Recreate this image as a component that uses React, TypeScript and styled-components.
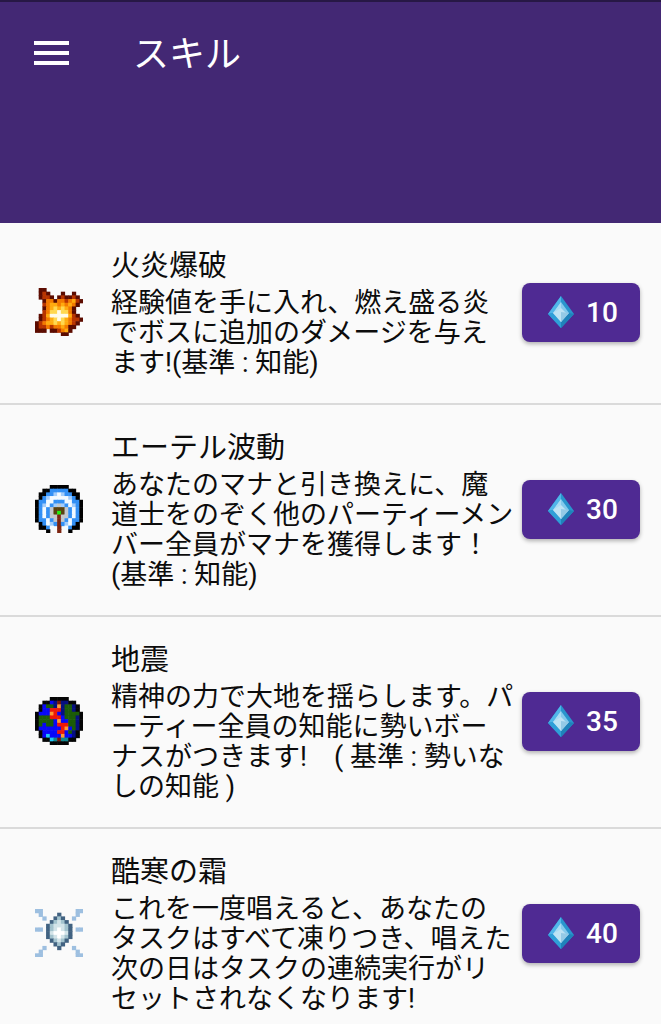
import React from 'react';
import styled, { createGlobalStyle } from 'styled-components';

const GlobalStyle = createGlobalStyle`
  * { box-sizing: border-box; }
  body {
    margin: 0;
    background: #fafafa;
    color: #0c0c0c;
    font-family: Roboto, 'Noto Sans CJK JP', sans-serif;
  }
`;

const Page = styled.div`
  height: 100vh;
  overflow: hidden;
`;

const Header = styled.header`
  height: 223px;
  padding: 25px 34px 0;
  border-top: 2px solid #271845;
  background: #432874;
`;

const Toolbar = styled.div`
  display: flex;
  align-items: center;
  gap: 64px;
  height: 52px;
`;

const MenuButton = styled.button`
  display: flex;
  padding: 0;
  border: 0;
  background: none;
  cursor: pointer;
`;

const Title = styled.h1`
  margin: 0;
  padding-top: 4px;
  color: #fff;
  font-size: 36px;
  font-weight: 400;
  line-height: 52px;
`;

const SkillList = styled.ul`
  margin: 0;
  padding: 0;
  list-style: none;
`;

const SkillRow = styled.li`
  display: flex;
  align-items: center;
  padding: 23px 21px 25px 35px;
  border-bottom: 2px solid #dadada;
`;

const PixelSvg = styled.svg`
  flex: none;
  width: 48px;
  height: 48px;
  margin-right: 28px;
`;

const SkillText = styled.div`
  flex: 1;
  min-width: 0;
`;

const SkillName = styled.h2`
  margin: 0;
  font-size: 29px;
  font-weight: 400;
  line-height: 41px;
`;

const SkillNotes = styled.p`
  margin: 0;
  padding-top: 1px;
  font-size: 27px;
  line-height: 30px;
  white-space: pre;
`;

const CastButton = styled.button`
  display: flex;
  flex: none;
  align-items: center;
  gap: 12px;
  width: 118px;
  height: 59px;
  padding: 0 0 0 26px;
  border: 0;
  border-radius: 8px;
  background: #4f2a93;
  box-shadow: 0 2px 4px rgba(0, 0, 0, 0.3);
  color: #fff;
  font: 500 28px/32px Roboto, sans-serif;
  cursor: pointer;
`;

const Cost = styled.span`
  padding-top: 2px;
`;

const palettes = {
  flame: { D: '#5c0c00', r: '#b83400', o: '#f37a00', y: '#ffab10', Y: '#ffd850', w: '#fffbe8' },
  wave: { K: '#000', b: '#3390f5', l: '#a4cdfb', w: '#f4faff', g: '#c4c8cc', n: '#5a4110', G: '#20f010', r: '#7c2410' },
  globe: { K: '#050505', b: '#0808f8', n: '#061080', g: '#1c5c08', r: '#ee1808', o: '#ff9a30', c: '#20c8f8', t: '#108890', d: '#781808' },
  frost: { L: '#9dbfe0', S: '#416281', m: '#a3c3ce', p: '#d3e4e9', w: '#ffffff' },
};

const sprites = {
  flame: [
    '.DD..........',
    '.DrD...D..D..',
    '.DrrD.DrDDrD.',
    '..DooDooroyrD',
    '..royyoyoyoD.',
    '..DoyYyYyoD..',
    '..roYYwYYoD..',
    '.DrywwwwwyrD.',
    '.DroyYwYyorrD',
    'DroyyYyYyorD.',
    'DrrorooyoDD..',
    'DDD.DDroyD...',
    '.......DD....',
  ],
  wave: [
    '....KKKKK....',
    '..KKbbbbbKK..',
    '.KKbblwlbbKK.',
    '.KblwwwwwlbK.',
    'KbbwwbbbwwbbK',
    'KblwblglbwlbK',
    'KbwbgnnngbwbK',
    'KbwbgnGngbwbK',
    'KbwbggrggbwbK',
    'KbbwbgrgbwbbK',
    '.KbwlbrblwbK.',
    '.KKbw.r.wbKK.',
    '...K..r..K...',
  ],
  globe: [
    '....KKKKK....',
    '..KKbndnnKK..',
    '.KbggnonggnK.',
    '.KbbrrrnggnK.',
    'KbbborbnggggK',
    'KgggrrrbgggnK',
    'KggggbobbggnK',
    'KgbggbrrrggnK',
    'KbbbbbbrobgnK',
    '.KbbbbrrbgnK.',
    '.KbcbbbobbnK.',
    '..KKctdttKK..',
    '....KKKKK....',
  ],
  frost: [
    'LL.........LL',
    '.L....S....L.',
    '..L..SmS..L..',
    '....SmpmS....',
    '...SmpppmS...',
    'LL.SmpwpmS.LL',
    '...SpwwwpS...',
    '...SmpwpmS...',
    '....SmpmS....',
    '.....SmS.....',
    '..L...S...L..',
    '.L.........L.',
    'LL.........LL',
  ],
};

type SpriteName = keyof typeof sprites;

function Sprite({ name }: { name: SpriteName }) {
  const palette = palettes[name] as Record<string, string>;
  return (
    <PixelSvg viewBox="0 0 13 13" aria-hidden="true">
      {sprites[name].flatMap((line, y) =>
        [...line].map((key, x) =>
          key === '.' ? null : (
            <rect key={`${x}-${y}`} x={x} y={y} width="1.15" height="1.15" fill={palette[key]} />
          ),
        ),
      )}
    </PixelSvg>
  );
}

function ManaGem() {
  return (
    <svg width="26" height="32" viewBox="0 0 26 32" aria-hidden="true">
      <path d="M13 0 26 18 13 32 0 18Z" fill="#2995cd" />
      <path d="M13 0 0 18 5 17 13 6Z" fill="#50b5e9" />
      <path d="M0 18 13 32V26L5 17Z" fill="#2f9fd8" />
      <path d="M26 18 13 32V26L21 17Z" fill="#1f83ba" />
      <path d="M13 6 21 17 13 26 5 17Z" fill="#84caec" />
      <path d="M13 6V16L5 17Z" fill="#a9dcf4" />
      <path d="M13 12 18 17 13 26 5 17Z" fill="#bee3f4" />
      <path d="M13 16 21 17 13 26Z" fill="#94cae6" />
    </svg>
  );
}

const skills: { icon: SpriteName; name: string; notes: string; cost: number }[] = [
  {
    icon: 'flame',
    name: '火炎爆破',
    notes: '経験値を手に入れ、燃え盛る炎\nでボスに追加のダメージを与え\nます!(基準 : 知能)',
    cost: 10,
  },
  {
    icon: 'wave',
    name: 'エーテル波動',
    notes: 'あなたのマナと引き換えに、魔\n道士をのぞく他のパーティーメン\nバー全員がマナを獲得します！\n(基準 : 知能)',
    cost: 30,
  },
  {
    icon: 'globe',
    name: '地震',
    notes: '精神の力で大地を揺らします。パ\nーティー全員の知能に勢いボー\nナスがつきます!　( 基準 : 勢いな\nしの知能 )',
    cost: 35,
  },
  {
    icon: 'frost',
    name: '酷寒の霜',
    notes: 'これを一度唱えると、あなたの\nタスクはすべて凍りつき、唱えた\n次の日はタスクの連続実行がリ\nセットされなくなります!',
    cost: 40,
  },
];

export default function App() {
  return (
    <Page lang="ja">
      <GlobalStyle />
      <Header>
        <Toolbar>
          <MenuButton type="button" aria-label="メニュー">
            <svg width="35" height="24" viewBox="0 0 35 24" fill="#fff" aria-hidden="true">
              <path d="M0 0h35v4H0zM0 10h35v4H0zM0 20h35v4H0z" />
            </svg>
          </MenuButton>
          <Title>スキル</Title>
        </Toolbar>
      </Header>
      <SkillList>
        {skills.map((skill) => (
          <SkillRow key={skill.name}>
            <Sprite name={skill.icon} />
            <SkillText>
              <SkillName>{skill.name}</SkillName>
              <SkillNotes>{skill.notes}</SkillNotes>
            </SkillText>
            <CastButton type="button">
              <ManaGem />
              <Cost>{skill.cost}</Cost>
            </CastButton>
          </SkillRow>
        ))}
      </SkillList>
    </Page>
  );
}
